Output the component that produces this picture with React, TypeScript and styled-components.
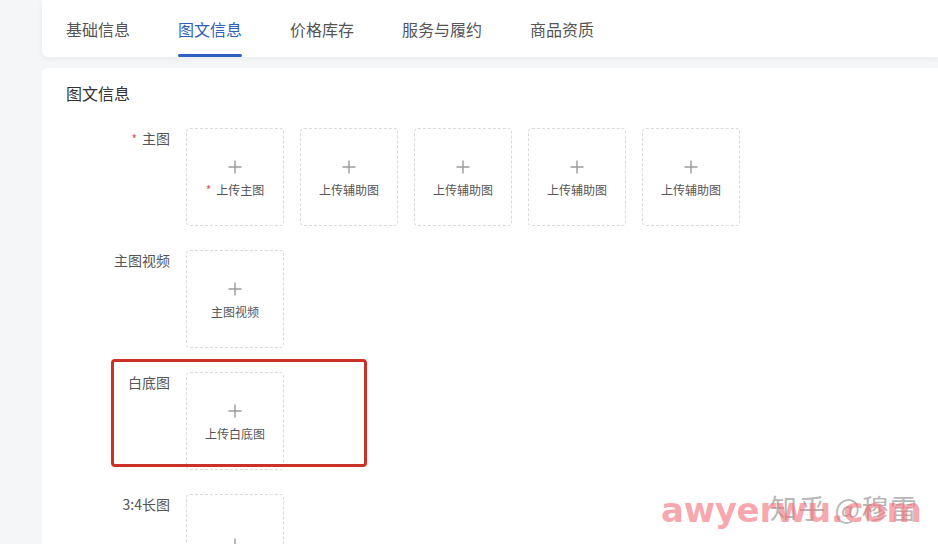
import styled, { createGlobalStyle } from 'styled-components';

const Global = createGlobalStyle`
	body {
		margin: 0;
		background: #f5f6f8;
		font-family: "Noto Sans CJK SC", "Noto Sans", sans-serif;
		overflow: hidden;
	}
`;

const Page = styled.div`
	position: relative;
	width: 938px;
	height: 544px;
	padding-left: 42px;
	box-sizing: border-box;
	display: flex;
	flex-direction: column;
	gap: 11px;
	overflow: hidden;
`;

const TabBar = styled.div`
	display: flex;
	flex-shrink: 0;
	gap: 48px;
	height: 57px;
	padding: 0 24px;
	background: #fff;
	border-radius: 0 0 0 6px;
	box-shadow: 0 2px 6px rgba(0, 0, 0, 0.05);
	box-sizing: border-box;
`;

const Tab = styled.div<{ active?: boolean }>`
	position: relative;
	display: flex;
	align-items: center;
	height: 100%;
	padding-bottom: 1px;
	font-size: 16px;
	color: ${({ active }) => (active ? '#2f5fb8' : '#555')};

	&::after {
		content: '';
		display: ${({ active }) => (active ? 'block' : 'none')};
		position: absolute;
		left: 0;
		right: 0;
		bottom: 1px;
		height: 3px;
		border-radius: 2px;
		background: #2f62c0;
	}
`;

const Card = styled.div`
	flex: 1 0 auto;
	background: #fff;
	border-radius: 6px 0 0 0;
	padding: 14px 24px 0;
	display: flex;
	flex-direction: column;
`;

const Title = styled.div`
	font-size: 16px;
	color: #333;
	line-height: 22px;
	margin-bottom: 24px;
`;

const Row = styled.div`
	display: flex;
	gap: 16px;
	margin-bottom: 24px;
`;

const Label = styled.div`
	width: 104px;
	flex-shrink: 0;
	text-align: right;
	font-size: 14px;
	color: #555;
	line-height: 20px;
`;

const Star = styled.span`
	color: #e0505a;
	font-size: 12px;
	margin-right: 5px;
`;

const Uploads = styled.div`
	display: flex;
	gap: 16px;
`;

const UploadBox = styled.div`
	width: 98px;
	height: 98px;
	flex-shrink: 0;
	box-sizing: border-box;
	border: 1px dashed #dadada;
	border-radius: 4px;
	display: flex;
	flex-direction: column;
	align-items: center;
	justify-content: center;
	gap: 8px;
	padding-top: 4px;
`;

const UploadText = styled.div`
	font-size: 12px;
	color: #555;
	line-height: 16px;
`;

const Highlight = styled.div`
	position: absolute;
	left: 111px;
	top: 359px;
	width: 256px;
	height: 108px;
	box-sizing: border-box;
	border: 3px solid #cc3128;
	border-radius: 4px;
`;

const Mark = styled.div`
	position: absolute;
	left: 770px;
	top: 488px;
	font-size: 27px;
	color: rgba(120, 120, 120, 0.55);
	letter-spacing: 1.5px;
	white-space: nowrap;
`;

const Site = styled.div`
	position: absolute;
	left: 661px;
	top: 490px;
	font-family: "DejaVu Sans", sans-serif;
	font-weight: bold;
	font-size: 34px;
	letter-spacing: -0.3px;
	color: rgba(242, 110, 120, 0.6);
	white-space: nowrap;
`;

const tabs = ['基础信息', '图文信息', '价格库存', '服务与履约', '商品资质'];

const PlusIcon = () => (
	<svg width="14" height="14" viewBox="0 0 14 14">
		<path d="M7 0.5v13M0.5 7h13" stroke="#9a9a9a" strokeWidth="1.4" fill="none" />
	</svg>
);

const Upload: React.FC<{ text: string; required?: boolean }> = ({ text, required }) => (
	<UploadBox>
		<PlusIcon />
		{text && (
			<UploadText>
				{required && <Star>*</Star>}
				{text}
			</UploadText>
		)}
	</UploadBox>
);

export default function App() {
	return (
		<>
			<Global />
			<Page>
				<TabBar>
					{tabs.map(t => (
						<Tab key={t} active={t === '图文信息'}>{t}</Tab>
					))}
				</TabBar>
				<Card>
					<Title>图文信息</Title>
					<Row>
						<Label><Star>*</Star>主图</Label>
						<Uploads>
							<Upload text="上传主图" required />
							<Upload text="上传辅助图" />
							<Upload text="上传辅助图" />
							<Upload text="上传辅助图" />
							<Upload text="上传辅助图" />
						</Uploads>
					</Row>
					<Row>
						<Label>主图视频</Label>
						<Uploads>
							<Upload text="主图视频" />
						</Uploads>
					</Row>
					<Row>
						<Label>白底图</Label>
						<Uploads>
							<Upload text="上传白底图" />
						</Uploads>
					</Row>
					<Row>
						<Label>3:4长图</Label>
						<Uploads>
							<Upload text="" />
						</Uploads>
					</Row>
				</Card>
				<Highlight />
				<Mark>知乎 @穆雷</Mark>
				<Site>awyerwu.com</Site>
			</Page>
		</>
	);
}
